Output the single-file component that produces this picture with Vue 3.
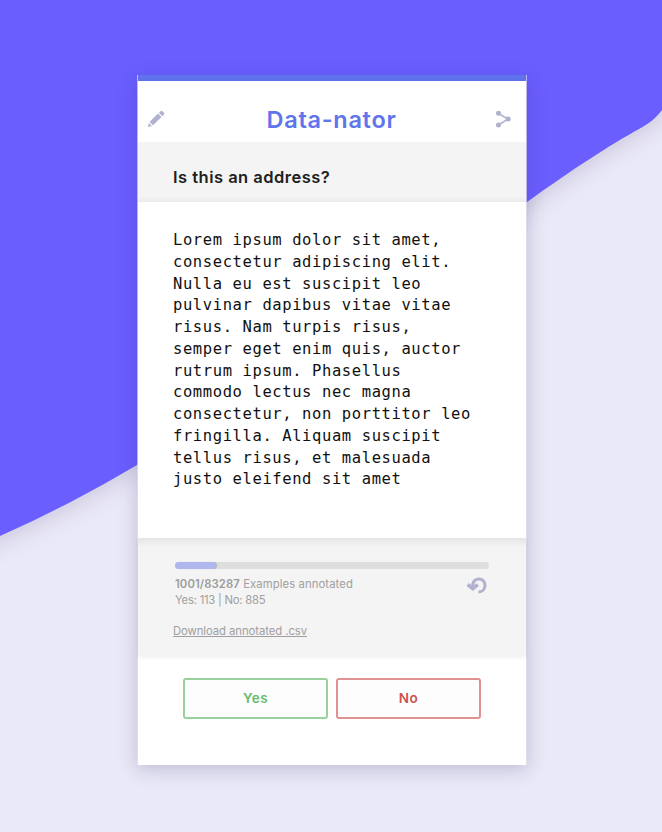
<script setup>
const lines = [
  'Lorem ipsum dolor sit amet,',
  'consectetur adipiscing elit.',
  'Nulla eu est suscipit leo',
  'pulvinar dapibus vitae vitae',
  'risus. Nam turpis risus,',
  'semper eget enim quis, auctor',
  'rutrum ipsum. Phasellus',
  'commodo lectus nec magna',
  'consectetur, non porttitor leo',
  'fringilla. Aliquam suscipit',
  'tellus risus, et malesuada',
  'justo eleifend sit amet',
]
</script>

<template>
  <div class="page">
    <svg class="backdrop" width="662" height="832" viewBox="0 0 662 832" aria-hidden="true">
      <path class="wave" d="M-40 -40H720V20C690 65 668 104 662 110C657 117 650 123 639 129C610 145 573 169 527 202L137 465Q70 505 0 536L-40 552Z" />
    </svg>
    <main class="card">
      <header class="header">
        <svg class="pencil" width="18" height="18" viewBox="0 0 18 18">
          <path d="M1 17L1.7 12.9L5 16ZM2.5 12L11 3.6L14.5 7.1L6 15.3ZM12 2.8L13.6 1.2Q14.5.4 15.4 1.2L17 2.8Q17.8 3.7 17 4.6L15.3 6.2Z" />
        </svg>
        <h1 class="title">Data-nator</h1>
        <svg class="share" width="17" height="18" viewBox="0 0 17 18">
          <path d="M3.5 3.5L13 9L3.5 15" />
          <circle cx="3.5" cy="3.3" r="2.5" /><circle cx="13.2" cy="9" r="2.5" /><circle cx="3.5" cy="15" r="2.5" />
        </svg>
      </header>
      <section class="question"><h2>Is this an address?</h2></section>
      <section class="sample"><div v-for="line in lines" :key="line">{{ line }}</div></section>
      <section class="status">
        <div class="track"><div class="fill"></div></div>
        <div class="row">
          <div class="stats">
            <div class="count"><b>1001/83287</b> <span>Examples annotated</span></div>
            <div class="votes">Yes: 113 | No: 885</div>
          </div>
          <svg class="undo" width="22" height="19" viewBox="0 0 22 19">
            <path class="arc" d="M6.7 10.5C6.4 5.8 8.8 3 12.8 3C16.4 3 19 5.6 19 9.2C19 13 16.3 16 12.5 16" />
            <path class="head" d="M1.7 8.5L6.8 12.6L11.8 8.7" />
          </svg>
        </div>
        <a class="download">Download annotated .csv</a>
      </section>
      <footer class="actions">
        <button class="yes">Yes</button>
        <button class="no">No</button>
      </footer>
    </main>
  </div>
</template>

<style>
body { overflow: hidden; }
</style>

<style scoped>
.page {
  position: relative;
  box-sizing: border-box;
  width: 662px;
  height: 832px;
  padding: 75px 0 0 137px;
  overflow: hidden;
  background: #eae9f7;
  font-family: Inter, Roboto, "Liberation Sans", sans-serif;
}
.backdrop { position: absolute; left: 0; top: 0; }
.wave { fill: #6a5eff; filter: drop-shadow(0 5px 11px rgba(45, 35, 100, .17)); }
.card {
  position: relative;
  box-sizing: border-box;
  width: 390px;
  height: 690px;
  border: solid rgba(226, 225, 236, .7);
  border-width: 0 1px;
  background: #fff;
  background-clip: padding-box;
  box-shadow: 0 4px 18px rgba(50, 40, 110, .24);
}
.header {
  box-sizing: border-box;
  height: 67px;
  display: flex;
  align-items: center;
  justify-content: space-between;
  padding: 10px 14px 0 9px;
  border-top: 6px solid #5f72ec;
}
.pencil { fill: #b0b1cf; margin-top: 5px; }
.share { fill: #b0b1cf; margin-top: 5px; }
.share path { fill: none; stroke: #b0b1cf; stroke-width: 1.5; }
.title {
  margin: 6px 0 0 3px;
  color: #6074ec;
  font-size: 23.5px;
  font-weight: 600;
  line-height: 30px;
  letter-spacing: .7px;
  white-space: nowrap;
}
.question {
  box-sizing: border-box;
  height: 60px;
  padding: 24px 35px 0;
  background: linear-gradient(#f4f4f4 54px, #ebebeb);
}
.question h2 {
  margin: 0;
  color: #202020;
  font-size: 16.5px;
  font-weight: 600;
  line-height: 22px;
  letter-spacing: .48px;
}
.sample {
  box-sizing: border-box;
  height: 336px;
  padding: 28px 35px 0;
  color: #111;
  font-family: "DejaVu Sans Mono", monospace;
  font-size: 15.5px;
  line-height: 21.75px;
  letter-spacing: .6px;
  white-space: pre;
}
.status {
  position: relative;
  box-sizing: border-box;
  height: 117px;
  padding: 24px 37px 0;
  background: linear-gradient(#e5e5e5, #f4f4f4 9px);
  box-shadow: 0 2px 4px rgba(0, 0, 0, .07);
}
.track { height: 7px; border-radius: 4px; background: #dedede; }
.fill { width: 41px; height: 7px; border-radius: 4px; background: #afb8ed; box-shadow: 1px 0 1px rgba(0, 0, 0, .2); }
.row { display: flex; justify-content: space-between; padding-top: 7px; }
.stats { color: #a0a0a0; font-size: 11.3px; line-height: 16px; white-space: nowrap; }
.count { letter-spacing: .09px; }
.votes { letter-spacing: -.23px; }
.count b { font-weight: 600; color: #9c9c9c; }
.undo { fill: none; stroke: #b0b1cf; margin: 0 1px 0 0; }
.arc { stroke-width: 3.1; }
.head { stroke-width: 3.6; }
.download {
  display: block;
  width: max-content;
  margin: 15px 0 0 -2px;
  color: #a0a0a0;
  font-size: 11.3px;
  line-height: 16px;
  letter-spacing: -.07px;
  text-decoration: underline;
}
.actions { display: flex; gap: 8px; padding: 23px 0 0 45px; }
.actions button {
  box-sizing: border-box;
  width: 145px;
  height: 41px;
  padding: 0 0 2px;
  border: 2px solid;
  border-radius: 3px;
  background: #fdfdfd;
  font: 600 13.5px Inter, sans-serif;
  letter-spacing: .5px;
}
.actions .yes { color: #66bb69; border-color: #99d19c; }
.actions .no { color: #cc5251; border-color: #e09191; }
</style>
